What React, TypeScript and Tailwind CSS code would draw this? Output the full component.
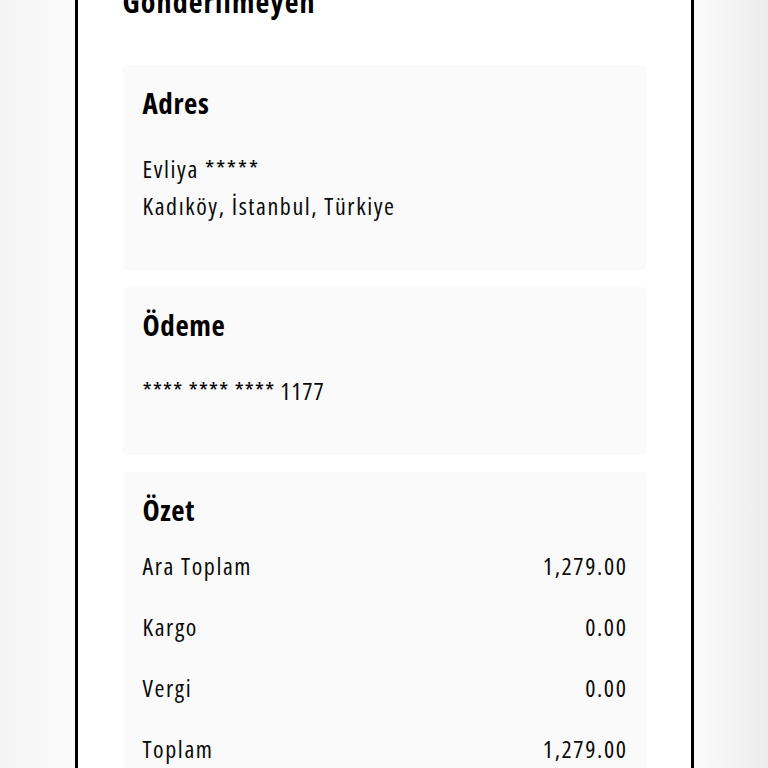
const font = "font-['Open_Sans',sans-serif]";

const summary = [
  { label: "Ara Toplam", value: "1,279.00" },
  { label: "Kargo", value: "0.00" },
  { label: "Vergi", value: "0.00" },
  { label: "Toplam", value: "1,279.00" },
];

function PanelTitle({ children }: { children: React.ReactNode }) {
  return (
    <h3 className="text-[29px] leading-[36px] font-bold tracking-[0.6px] text-black [font-stretch:75%]">
      {children}
    </h3>
  );
}

export default function App() {
  return (
    <div className={`min-h-screen overflow-hidden bg-[linear-gradient(to_right,#f4f4f4,#fafafa_9%,#fafafa_91%,#ececec)] ${font}`}>
      <div className="mx-auto min-h-screen w-[619px] border-x-[3px] border-black bg-white px-[45px] pb-10">
        <h2 className="mt-[-16px] mb-[45px] text-[30px] leading-[36px] font-bold tracking-[1.1px] text-black [font-stretch:75%]">
          Gönderilmeyen
        </h2>

        <div className="flex flex-col gap-[17px] text-[#0a0a0a] text-[24px] leading-[37px] font-medium tracking-[1.6px] [font-stretch:75%]">
          {/* Address */}
          <section className="rounded bg-[#fafafa] px-5 pt-5 pb-[46px]">
            <PanelTitle>Adres</PanelTitle>
            <div className="mt-[29px]">
              <p>Evliya *****</p>
              <p>Kadıköy, İstanbul, Türkiye</p>
            </div>
          </section>

          {/* Payment */}
          <section className="rounded bg-[#fafafa] px-5 pt-5 pb-[46px]">
            <PanelTitle>Ödeme</PanelTitle>
            <p className="mt-[29px] tracking-[0.8px]">**** **** **** 1177</p>
          </section>

          {/* Summary */}
          <section className="rounded bg-[#fafafa] px-5 pt-5 pb-6">
            <PanelTitle>Özet</PanelTitle>
            <div className="mt-[19px] flex flex-col gap-6">
              {summary.map((row) => (
                <div key={row.label} className="flex items-center justify-between">
                  <span>{row.label}</span>
                  <span className="mr-[-2px]">{row.value}</span>
                </div>
              ))}
            </div>
          </section>
        </div>
      </div>
    </div>
  );
}
